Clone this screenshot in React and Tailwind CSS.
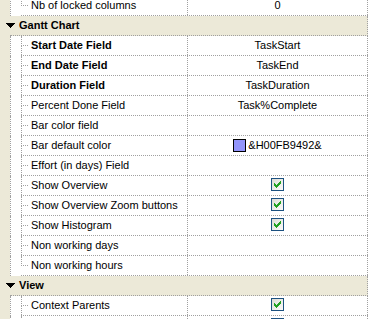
import React from 'react'

const DOT = 'border-dotted border-[#a0a0a0]'

function Check() {
  return (
    <div className="mt-[2px] flex h-[13px] w-[13px] items-center justify-center self-start border border-[#1c5180] bg-linear-to-br from-[#dcdcd5] to-[#fbfbf9]">
      <svg width="7" height="7" viewBox="0 0 7 7" shapeRendering="crispEdges">
        <path d="M6 0h1v3h-1v1h-1v1h-1v1h-1v1h-1v-1h-1v-1h-1v-3h1v1h1v1h1v-1h1v-1h1z" fill="#21a121" />
      </svg>
    </div>
  )
}

function Swatch({ color, text }) {
  return (
    <div className="flex items-center gap-[2px]">
      <div className="h-[13px] w-[13px] border border-black" style={{ backgroundColor: color }} />
      <span>{text}</span>
    </div>
  )
}

function Row({ label, bold, last, children }) {
  return (
    <div className="flex h-[20px]">
      <div className="w-[10px] shrink-0 bg-[#ece9d8]" />
      <div className={`w-[11px] shrink-0 border-l ${DOT}`} />
      <div className={`flex flex-1 border-b ${DOT}`}>
        <div className="flex w-[166px] shrink-0 items-center">
          <div className="flex h-full w-[10px] shrink-0 flex-col">
            <div className={`h-[10px] w-[7px] border-b border-l ${DOT}`} />
            {!last && <div className={`flex-1 border-l ${DOT}`} />}
          </div>
          {label && (
            <span className={`whitespace-nowrap ${bold ? 'font-bold' : ''}`}>{label}</span>
          )}
        </div>
        <div className={`flex flex-1 items-center justify-center border-l border-r ${DOT}`}>
          {children}
        </div>
      </div>
    </div>
  )
}

function Category({ label }) {
  return (
    <div className="flex h-[20px] bg-[#ece9d8]">
      <div className="w-[10px] shrink-0" />
      <div className={`flex flex-1 items-center border-b border-r ${DOT}`}>
        <svg className="-ml-[4px] mr-[4px]" width="9" height="5" viewBox="0 0 9 5" shapeRendering="crispEdges">
          <path d="M0 0h9v1h-1v1h-1v1h-1v1h-1v1h-1v-1h-1v-1h-1v-1h-1v-1h-1z" fill="#000" />
        </svg>
        <span className="font-bold">{label}</span>
      </div>
    </div>
  )
}

export default function App() {
  return (
    <div className="h-[319px] w-[368px] overflow-hidden bg-white font-['Liberation_Sans',Arial,sans-serif] text-[11px] text-black">
      <div className="-mt-[4px]">
        <Row label="Nb of locked columns" last>0</Row>

        <Category label="Gantt Chart" />
        <Row label="Start Date Field" bold>TaskStart</Row>
        <Row label="End Date Field" bold>TaskEnd</Row>
        <Row label="Duration Field" bold>TaskDuration</Row>
        <Row label="Percent Done Field">Task%Complete</Row>
        <Row label="Bar color field" />
        <Row label="Bar default color">
          <Swatch color="#9294fb" text="&H00FB9492&" />
        </Row>
        <Row label="Effort (in days) Field" />
        <Row label="Show Overview"><Check /></Row>
        <Row label="Show Overview Zoom buttons"><Check /></Row>
        <Row label="Show Histogram"><Check /></Row>
        <Row label="Non working days" />
        <Row label="Non working hours" last />

        <Category label="View" />
        <Row label="Context Parents"><Check /></Row>
        <Row><Check /></Row>
      </div>
    </div>
  )
}
